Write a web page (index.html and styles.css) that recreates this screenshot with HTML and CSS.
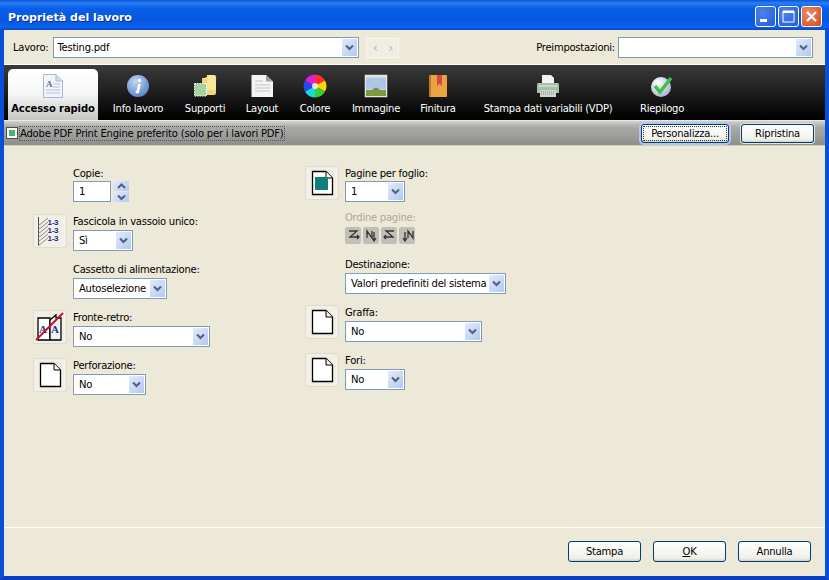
FILE: index.html
```html
<!DOCTYPE html>
<html lang="it">
<head>
<meta charset="utf-8">
<title>Proprietà del lavoro</title>
<link rel="stylesheet" href="styles.css">
</head>
<body>
<svg class="defs" width="0" height="0" aria-hidden="true">
  <symbol id="chev" viewBox="0 0 9 7"><path d="M1 1.500 4.500 5 8 1.500" fill="none" stroke="#4d6185" stroke-width="2"/></symbol>
  <symbol id="page" viewBox="0 0 24 26"><path d="M2.500 1.500H16L22.500 8V24.500H2.500Z" fill="#fff" stroke="#000" stroke-width="1.300"/><path d="M16 1.500V8H22.500" fill="#f4f4f4" stroke="#000"/></symbol>
</svg>
<div class="window">
  <header class="titlebar">
    <h1 class="title">Proprietà del lavoro</h1>
    <div class="winbtns">
      <span class="winbtn"><svg width="21" height="21" viewBox="0 0 21 21"><rect x="5" y="13" width="7" height="3" fill="#fff"/></svg></span>
      <span class="winbtn"><svg width="21" height="21" viewBox="0 0 21 21"><path d="M5 5h11v11H5z" fill="none" stroke="#fff"/><path d="M5 6h11" stroke="#fff" stroke-width="2"/></svg></span>
      <span class="winbtn close"><svg width="21" height="21" viewBox="0 0 21 21"><path d="M6 6l9 9M15 6l-9 9" stroke="#fff" stroke-width="2.200"/></svg></span>
    </div>
  </header>

  <div class="jobbar">
    <span class="joblabel">Lavoro:</span>
    <div class="select job"><span class="val">Testing.pdf</span><span class="arrow"><svg width="9" height="7"><use href="#chev"/></svg></span></div>
    <div class="pager"><span>‹</span><span>›</span></div>
    <span class="spacer"></span>
    <span class="joblabel">Preimpostazioni:</span>
    <div class="select preset"><span class="val"></span><span class="arrow"><svg width="9" height="7"><use href="#chev"/></svg></span></div>
  </div>

  <nav class="tabs">
    <div class="tab active t0">
      <svg width="24" height="24" viewBox="0 0 24 24"><path d="M2.500.5H15L21.500 7V23.500H2.500Z" fill="#f1f4fa" stroke="#a9b6cf"/><path d="M15 .5V7H21.500" fill="#d5dcea" stroke="#a9b6cf"/><text x="5" y="13" class="ic-a">A</text><path d="M12 10h7M12 13h7M5 16h14M5 19h14" stroke="#b5c0d6"/></svg>
      <span class="tablabel">Accesso rapido</span>
    </div>
    <div class="tab t1">
      <svg width="24" height="24" viewBox="0 0 24 24"><defs><radialGradient id="gi" cx=".4" cy=".3" r=".8"><stop offset="0" stop-color="#c4d6f3"/><stop offset="1" stop-color="#4f7cc8"/></radialGradient></defs><circle cx="12" cy="12" r="11" fill="url(#gi)"/><circle cx="13.500" cy="6.500" r="1.800" fill="#fff"/><path d="M13.500 10l-1.800 8h-2" stroke="#fff" stroke-width="2.600" fill="none"/></svg>
      <span class="tablabel">Info lavoro</span>
    </div>
    <div class="tab t2">
      <svg width="24" height="24" viewBox="0 0 24 24"><path d="M9 4h3l1-1h9q2 0 1 2v14q0 2-2 2H9z" fill="#f0d877"/><path d="M14 1h7q2 0 2 2v13h-9z" fill="#f8e79a"/><rect x="1.500" y="9.500" width="12" height="12.500" fill="#a7d3a2" stroke="#fff" stroke-dasharray="1.500 1"/></svg>
      <span class="tablabel">Supporti</span>
    </div>
    <div class="tab t3">
      <svg width="24" height="24" viewBox="0 0 24 24"><path d="M1.500 1H16L23 7.500V23H1.500Z" fill="#f4f4f4"/><path d="M16 1V7.500H23Z" fill="#9e9e9e"/><path d="M5 7h8M5 11h15M5 14h15M5 17h15" stroke="#c0c4cc"/></svg>
      <span class="tablabel">Layout</span>
    </div>
    <div class="tab t4">
      <svg width="24" height="24" viewBox="0 0 24 24"><circle cx="12" cy="12" r="11.500" fill="#222"/><path d="M12 12 12 .5A11.500 11.500 0 0 1 22 6.500Z" fill="#ff3030"/><path d="M12 12 22 6.500A11.500 11.500 0 0 1 22 17.500Z" fill="#ffd300"/><path d="M12 12 22 17.500A11.500 11.500 0 0 1 12 23.500Z" fill="#38d030"/><path d="M12 12 12 23.500A11.500 11.500 0 0 1 2 17.500Z" fill="#18d8d8"/><path d="M12 12 2 17.500A11.500 11.500 0 0 1 2 6.500Z" fill="#2848f0"/><path d="M12 12 2 6.500A11.500 11.500 0 0 1 12 .5Z" fill="#e020d0"/><circle cx="12" cy="12" r="3" fill="#fff" opacity=".8"/></svg>
      <span class="tablabel">Colore</span>
    </div>
    <div class="tab t5">
      <svg width="24" height="24" viewBox="0 0 24 24"><rect x="1.500" y="1.500" width="21" height="21" fill="#cfdcec" stroke="#e6e6e6" stroke-width="1.500"/><path d="M2 4h20v11H2z" fill="#aec7e6"/><path d="M2 16h20v6H2z" fill="#7a9a3c"/><path d="M8 16q4-5 8 0z" fill="#6b8f5a"/></svg>
      <span class="tablabel">Immagine</span>
    </div>
    <div class="tab t6">
      <svg width="24" height="24" viewBox="0 0 24 24"><rect x="3" y="1" width="18" height="22" rx="1" fill="#e8a53e"/><path d="M3 1h2v22H3z" fill="#bd7a22"/><path d="M11 1h5v11l-2.500-2.500L11 12z" fill="#d8464a"/></svg>
      <span class="tablabel">Finitura</span>
    </div>
    <div class="tab t7">
      <svg width="24" height="24" viewBox="0 0 24 24"><path d="M6 1h9l3 3v6H6z" fill="#f2f4f4"/><path d="M2 9h20q1 0 1 2v8H1v-8q0-2 1-2z" fill="#a6c0aa"/><path d="M3 12h18" stroke="#e4eee4"/><path d="M4 16h16v7H4z" fill="#cfd4cf"/><path d="M5 18h14M5 20h14" stroke="#8e9690" stroke-dasharray="1 1"/></svg>
      <span class="tablabel">Stampa dati variabili (VDP)</span>
    </div>
    <div class="tab t8">
      <svg width="24" height="24" viewBox="0 0 24 24"><defs><radialGradient id="gc" cx=".35" cy=".3" r=".8"><stop offset="0" stop-color="#fff"/><stop offset="1" stop-color="#9fb0cc"/></radialGradient></defs><circle cx="11" cy="13" r="10" fill="url(#gc)"/><path d="M5 12l5 6 11-14" fill="none" stroke="#3fc04c" stroke-width="3.500"/></svg>
      <span class="tablabel">Riepilogo</span>
    </div>
  </nav>

  <div class="optbar">
    <label class="engine"><span class="check"><span class="tick"></span></span><span class="enginetext">Adobe PDF Print Engine preferito (solo per i lavori PDF)</span></label>
    <span class="spacer"></span>
    <button class="btn small focus">Personalizza...</button>
    <button class="btn small">Ripristina</button>
  </div>

  <main class="content">
    <section class="col">
      <div class="row first">
        <div class="field">
          <span class="lbl">Copie:</span>
          <div class="spin"><div class="input">1</div><div class="spinbtns"><span class="sb"><svg width="9" height="7" viewBox="0 0 9 7"><path d="M1 5 4.500 1.500 8 5" fill="none" stroke="#4d6185" stroke-width="2"/></svg></span><span class="sb"><svg width="9" height="7"><use href="#chev"/></svg></span></div></div>
        </div>
      </div>
      <div class="row">
        <span class="iconbtn"><svg width="30" height="30" viewBox="0 0 30 30"><path d="M3.500 1V30" stroke="#444"/><path d="M3 10 13 2M3 14 13 6M3 18 13 10M3 22 13 14M3 26 13 18M3 30 13 22" stroke="#8c8c8c"/><text x="12.500" y="9" class="ic-n">1-3</text><text x="12.500" y="17" class="ic-n">1-3</text><text x="12.500" y="25" class="ic-n">1-3</text></svg></span>
        <div class="field">
          <span class="lbl">Fascicola in vassoio unico:</span>
          <div class="select w60"><span class="val">Sì</span><span class="arrow"><svg width="9" height="7"><use href="#chev"/></svg></span></div>
        </div>
      </div>
      <div class="row">
        <div class="field">
          <span class="lbl">Cassetto di alimentazione:</span>
          <div class="select w94"><span class="val">Autoselezione</span><span class="arrow"><svg width="9" height="7"><use href="#chev"/></svg></span></div>
        </div>
      </div>
      <div class="row">
        <span class="iconbtn"><svg width="30" height="30" viewBox="0 0 30 30"><path d="M3 6H15V28H3Z" fill="#fff" stroke="#000" stroke-width="1.300"/><path d="M15 28V8L21 3V6H26V28Z" fill="#f2f2f2" stroke="#000" stroke-width="1.300"/><text x="4" y="21" class="ic-d">A</text><text x="16" y="21" class="ic-d">A</text><path d="M1 28 28 1" stroke="#c8102e" stroke-width="2"/></svg></span>
        <div class="field">
          <span class="lbl">Fronte-retro:</span>
          <div class="select w137"><span class="val">No</span><span class="arrow"><svg width="9" height="7"><use href="#chev"/></svg></span></div>
        </div>
      </div>
      <div class="row">
        <span class="iconbtn"><svg width="24" height="26"><use href="#page"/></svg></span>
        <div class="field">
          <span class="lbl">Perforazione:</span>
          <div class="select w73"><span class="val">No</span><span class="arrow"><svg width="9" height="7"><use href="#chev"/></svg></span></div>
        </div>
      </div>
    </section>

    <section class="col right">
      <div class="row first">
        <span class="iconbtn"><svg width="24" height="26" viewBox="0 0 24 26"><path d="M2.500 1.500H16L22.500 8V24.500H2.500Z" fill="#fff" stroke="#000" stroke-width="1.300"/><path d="M16 1.500V8H22.500" fill="#f4f4f4" stroke="#000"/><rect x="5" y="7" width="13" height="13" fill="#0f7f7b"/></svg></span>
        <div class="field">
          <span class="lbl">Pagine per foglio:</span>
          <div class="select w60"><span class="val">1</span><span class="arrow"><svg width="9" height="7"><use href="#chev"/></svg></span></div>
        </div>
      </div>
      <div class="row order">
        <div class="field">
          <span class="lbl disabled">Ordine pagine:</span>
          <div class="orders">
            <span class="ord"><svg width="13" height="13" viewBox="0 0 13 13"><path d="M2 2h8L3 8h7M8 8h4M10 6l2 2-2 2" fill="none" stroke="#333" stroke-width="1.300"/></svg></span>
            <span class="ord"><svg width="13" height="13" viewBox="0 0 13 13"><path d="M2 9V2l5 7V2M9 3v8M7 9l2 3 2-3" fill="none" stroke="#333" stroke-width="1.300"/></svg></span>
            <span class="ord"><svg width="13" height="13" viewBox="0 0 13 13"><path d="M11 2H3l7 6H3M5 8H1M3 6 1 8l2 2" fill="none" stroke="#333" stroke-width="1.300"/></svg></span>
            <span class="ord"><svg width="13" height="13" viewBox="0 0 13 13"><path d="M4 3v8M2 9l2 3 2-3M7 9V2l5 7V2" fill="none" stroke="#333" stroke-width="1.300"/></svg></span>
          </div>
        </div>
      </div>
      <div class="row">
        <div class="field">
          <span class="lbl">Destinazione:</span>
          <div class="select w161"><span class="val">Valori predefiniti del sistema</span><span class="arrow"><svg width="9" height="7"><use href="#chev"/></svg></span></div>
        </div>
      </div>
      <div class="row">
        <span class="iconbtn"><svg width="24" height="26"><use href="#page"/></svg></span>
        <div class="field">
          <span class="lbl">Graffa:</span>
          <div class="select w137"><span class="val">No</span><span class="arrow"><svg width="9" height="7"><use href="#chev"/></svg></span></div>
        </div>
      </div>
      <div class="row">
        <span class="iconbtn"><svg width="24" height="26"><use href="#page"/></svg></span>
        <div class="field">
          <span class="lbl">Fori:</span>
          <div class="select w60"><span class="val">No</span><span class="arrow"><svg width="9" height="7"><use href="#chev"/></svg></span></div>
        </div>
      </div>
    </section>
  </main>

  <footer class="footer">
    <button class="btn large">Stampa</button>
    <button class="btn large"><u>O</u>K</button>
    <button class="btn large">Annulla</button>
  </footer>
</div>
</body>
</html>
```
FILE: styles.css
```css
* { box-sizing: border-box; }
html, body { margin: 0; padding: 0; }
body { width: 829px; height: 580px; overflow: hidden; font-family: "DejaVu Sans", sans-serif; font-size: 10px; letter-spacing: -.25px; color: #000; }
.defs { position: absolute; }
.window { width: 829px; height: 580px; display: flex; flex-direction: column; background: #ece9d8; border: solid #0a4fd8; border-width: 0 4px 4px; border-bottom-color: #0a3fc4; }
.titlebar { height: 30px; margin: 0 -4px; padding: 4px 7px 0 8px; display: flex; align-items: center; justify-content: space-between; background: linear-gradient(#0a52d6 0, #2a7df0 3px, #0a5fe8 8px, #0558e0 20px, #0a62ee 27px, #0b45c0 30px); }
.title { margin: 0; font-size: 11px; letter-spacing: 0; font-weight: bold; color: #fff; text-shadow: 1px 1px 0 #0a2d90; }
.winbtns { display: flex; gap: 2px; margin-top: -2px; }
.winbtn { width: 21px; height: 21px; display: block; border-radius: 3px; border: 1px solid #fff; background: radial-gradient(circle at 30% 30%, #4c82ee, #2a5bd6); overflow: hidden; }
.winbtn svg { display: block; margin: -1px; }
.winbtn.close { background: radial-gradient(circle at 30% 30%, #ee8a68, #d44a22); }
.jobbar { height: 33px; padding: 2px 12px 0 9px; display: flex; align-items: center; gap: 3px; }
.spacer { flex: 1; }
.pager { margin-left: 4px; width: 33px; height: 20px; display: flex; justify-content: space-around; align-items: center; color: #b8b6a8; background: #f0eee2; border: 1px solid #f6f5ee; font-size: 13px; }
.select { height: 21px; display: flex; align-items: center; background: #fff; border: 1px solid #7f9db9; padding: 1px; flex: none; }
.val { flex: 1; padding-left: 4px; white-space: nowrap; overflow: hidden; }
.job .val { padding-left: 2px; }
.arrow, .sb { width: 15px; height: 100%; flex: none; display: flex; align-items: center; justify-content: center; background: linear-gradient(135deg, #e2ebfb, #b4c8ee); }
.job { width: 306px; margin-left: 2px; }
.preset { width: 195px; }
.tabs { height: 56px; margin-top: 1px; padding: 4px 0 0 4px; display: flex; align-items: stretch; background: linear-gradient(#3a3a3a 0, #262626 20px, #0a0a0a 45px, #000 56px); border-top: 1px solid #fff; color: #fff; }
.tab { display: flex; flex-direction: column; align-items: center; padding-top: 5px; flex: none; }
.tab svg { display: block; }
.tablabel { margin-top: 4px; white-space: nowrap; line-height: 13px; }
.tab.active { background: linear-gradient(#fff 0, #f6f6f6 25px, #c8c8c8 50px); color: #000; border-radius: 5px 5px 0 0; font-weight: bold; letter-spacing: -.1px; }
.t0 { width: 90px; }
.t1 { width: 80px; }
.t2 { width: 54px; }
.t3 { width: 60px; }
.t4 { width: 46px; }
.t5 { width: 76px; }
.t6 { width: 48px; }
.t7 { width: 172px; }
.t8 { width: 56px; }
.optbar { height: 25px; margin-top: 1px; padding: 0 11px 0 2px; display: flex; align-items: center; gap: 12px; background: linear-gradient(#d2d2d0 0, #aaaaa8 6px, #8e8e8c 24px); border-bottom: 1px solid #d0cebe; }
.engine { display: flex; align-items: center; gap: 1px; letter-spacing: -.2px; }
.check { width: 12px; height: 12px; padding: 2px; background: #fff; border: 1px solid #3a5a40; display: block; }
.tick { display: block; width: 100%; height: 100%; background: #4caf6a; }
.enginetext { outline: 1px dotted #555; outline-offset: -1px; padding: 0 1px; line-height: 15px; }
.btn { font: inherit; letter-spacing: inherit; color: #000; background: linear-gradient(#fff, #f0f0ea 85%, #d6d0c5); border: 1px solid #003c74; border-radius: 3px; padding: 0; display: block; }
.btn.small { height: 19px; width: 73px; box-shadow: 0 0 0 1px #e6e4d6; }
.btn.focus { width: 88px; outline: 1px dotted #333; outline-offset: -3px; box-shadow: 0 0 0 2px #b4c8ee; }
.content { flex: 1; padding: 21px 0 0 29px; display: flex; border-bottom: 1px solid #fff; }
.col { width: 272px; display: flex; flex-direction: column; gap: 12px; }
.col.right { gap: 0; }
.row { height: 36px; display: flex; align-items: flex-start; position: relative; padding-left: 40px; }
.right .row { margin-bottom: 12px; }
.right .row.first { height: 35px; margin-bottom: 9px; }
.right .row.order { margin-bottom: 11px; }
.field { display: flex; flex-direction: column; align-items: flex-start; }
.lbl { height: 15px; line-height: 13px; white-space: nowrap; }
.first .lbl, .order .lbl { height: 14px; }
.lbl.disabled { color: #aca899; }
.iconbtn { position: absolute; left: 0; top: -1px; width: 34px; height: 34px; background: #f1efe6; border: 1px solid #dfdccc; border-radius: 2px; display: flex; align-items: center; justify-content: center; }
.spin { display: flex; gap: 2px; }
.input { width: 38px; height: 21px; border: 1px solid #7f9db9; background: #fff; line-height: 19px; padding-left: 5px; }
.spinbtns { width: 16px; height: 21px; display: flex; flex-direction: column; gap: 1px; }
.sb { width: 16px; flex: 1; }
.w60 { width: 60px; }
.w73 { width: 73px; }
.w94 { width: 94px; }
.w137 { width: 137px; }
.w161 { width: 161px; }
.orders { display: flex; gap: 2px; margin-top: 2px; }
.ord { width: 16px; height: 17px; background: #c2c0b6; border-radius: 2px; display: flex; align-items: center; justify-content: center; }
.ic-a { font-family: "Liberation Serif", serif; font-size: 9px; fill: #5a6a8a; }
.ic-n { font-family: "Liberation Sans", sans-serif; font-weight: bold; font-size: 8px; fill: #1a2a7a; }
.ic-d { font-family: "Liberation Serif", serif; font-weight: bold; font-size: 11px; fill: #1a3a8a; }
.footer { height: 48px; padding: 13px 14px 0 0; display: flex; justify-content: flex-end; gap: 12px; align-items: flex-start; }
.btn.large { width: 73px; height: 21px; }
```
